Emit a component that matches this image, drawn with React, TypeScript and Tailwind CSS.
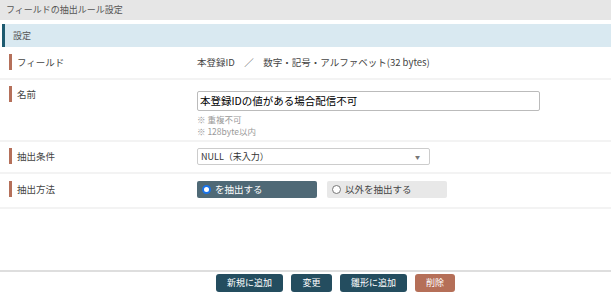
import React, { useState } from 'react';

const font = { fontFamily: '"Noto Sans CJK JP", "Noto Sans", sans-serif' };

const Row = ({ label, children, className = '' }: { label: string; children: React.ReactNode; className?: string }) => (
  <div className={`flex border-b-2 border-[#f3f3f3] ${className}`}>
    <div className="w-[197px] shrink-0 pl-[9px] flex items-start">
      <span className="w-[3px] h-[16px] bg-[#b5705a] mr-[5px]"></span>
      <span className="text-[9.5px] leading-[16px] text-[#444]">{label}</span>
    </div>
    <div className="flex-1">{children}</div>
  </div>
);

export default function App() {
  const [method, setMethod] = useState('include');

  const radio = (key: string, text: string) => {
    const on = method === key;
    return (
      <button
        onClick={() => setMethod(key)}
        className={`w-[120px] h-[17px] rounded-[2px] flex items-center gap-[4px] px-[5px] text-[9.5px] ${on ? 'bg-[#4f6976] text-white' : 'bg-[#e8e8e8] text-[#444]'}`}
      >
        <span className={`w-[9px] h-[9px] rounded-full bg-white ${on ? 'border-2 border-[#1a73e8]' : 'border border-[#777]'}`}></span>
        {text}
      </button>
    );
  };

  return (
    <div className="w-[611px] h-[295px] bg-white flex flex-col overflow-hidden" style={font}>
      <div className="h-[20px] bg-[#e6e6e6] px-[6px] flex items-center text-[9px] text-[#555]">
        フィールドの抽出ルール設定
      </div>

      <div className="mt-[4px] ml-[2px] h-[23px] bg-[#d9e9f1] border-l-[3px] border-[#1d5a70] pl-[8px] flex items-center text-[9px] text-[#555]">
        設定
      </div>

      <Row label="フィールド" className="pt-[7px] h-[33px]">
        <div className="text-[9.5px] leading-[16px] text-[#444]">
          本登録ID　／　数字・記号・アルファベット(32 bytes)
        </div>
      </Row>

      <Row label="名前" className="pt-[6px] h-[62px]">
        <input
          type="text"
          defaultValue="本登録IDの値がある場合配信不可"
          className="w-[343px] h-[20px] border border-[#bbb] rounded-[2px] px-[2px] text-[10.5px] text-black outline-none"
          style={font}
        />
        <div className="mt-[2px] text-[8.5px] leading-[12px] text-[#999]">
          <div>※ 重複不可</div>
          <div>※ 128byte以内</div>
        </div>
      </Row>

      <Row label="抽出条件" className="pt-[6px] h-[32px]">
        <div className="w-[233px] h-[17px] border border-[#ccc] rounded-[2px] flex items-center justify-between pl-[3px] pr-[9px] text-[9px] text-[#333]">
          <span>NULL（未入力）</span>
          <span className="text-[5px] text-[#777]">▼</span>
        </div>
      </Row>

      <Row label="抽出方法" className="pt-[7px] h-[35px]">
        <div className="flex gap-[10px]">
          {radio('include', 'を抽出する')}
          {radio('exclude', '以外を抽出する')}
        </div>
      </Row>

      <div className="flex-1"></div>

      <div className="h-[25px] border-t-2 border-[#dedede] flex justify-center items-start pt-[2px] gap-[8px] pl-[60px]">
        <button className="w-[67px] h-[18px] rounded-[3px] bg-[#244d5f] text-white text-[9px]">新規に追加</button>
        <button className="w-[41px] h-[18px] rounded-[3px] bg-[#244d5f] text-white text-[9px]">変更</button>
        <button className="w-[67px] h-[18px] rounded-[3px] bg-[#244d5f] text-white text-[9px]">雛形に追加</button>
        <button className="w-[40px] h-[18px] rounded-[3px] bg-[#b56f58] text-white text-[9px]">削除</button>
      </div>
    </div>
  );
}
